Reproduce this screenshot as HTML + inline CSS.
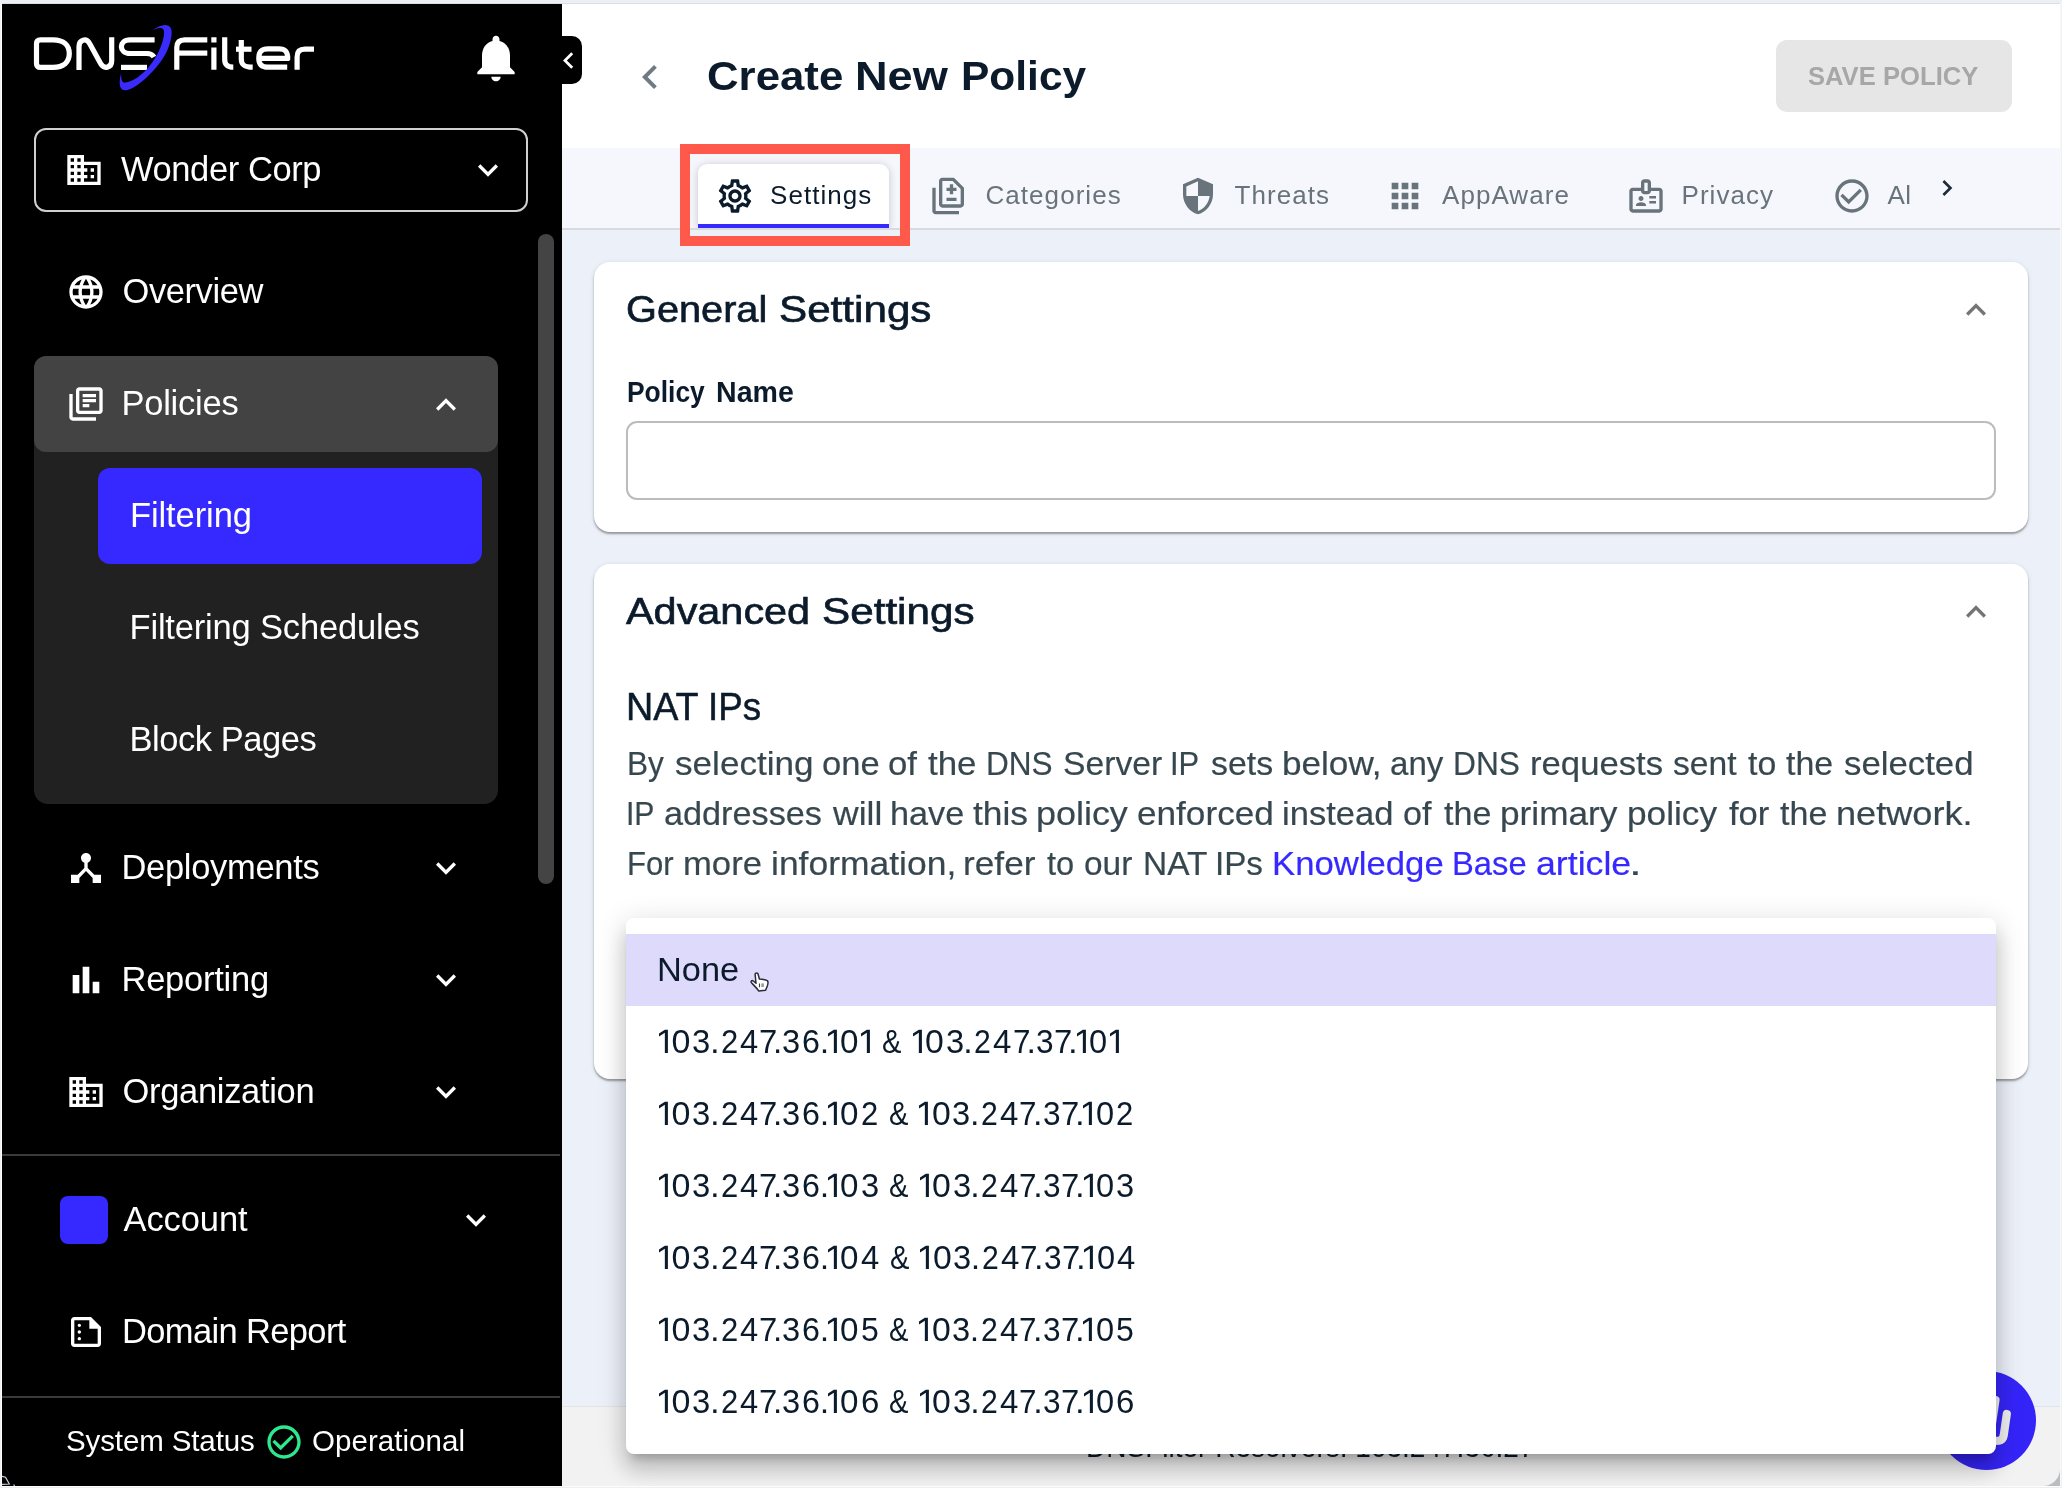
<!DOCTYPE html>
<html>
<head>
<meta charset="utf-8">
<title>Create New Policy</title>
<style>
*{box-sizing:border-box;margin:0;padding:0}
html,body{width:2062px;height:1488px;overflow:hidden;background:#ecf0f9;font-family:"Liberation Sans",sans-serif;}
body{position:relative}
#all{position:absolute;left:0;top:0;width:2062px;height:1488px;will-change:transform}
.a{position:absolute}
.t{position:absolute;white-space:nowrap}
svg{position:absolute;overflow:visible}
/* sidebar */
#side{left:2px;top:4px;width:560px;height:1482px;background:#000}
.nav{font-size:34.5px;letter-spacing:-.25px;line-height:40px;color:#fff}
.sub{font-size:34.5px;letter-spacing:-.25px;line-height:40px;color:#fff}
/* main */
#hdr{left:562px;top:4px;width:1498px;height:144px;background:#fff}
#tabs{left:562px;top:148px;width:1498px;height:80px;background:#f6f7fc}
#tabline{left:562px;top:228px;width:1498px;height:2px;background:#d9dade}
.tab{font-size:26px;line-height:40px;color:#68737c;letter-spacing:1.05px}
.card{left:594px;width:1434px;background:#fff;border-radius:16px;box-shadow:0 2px 2px rgba(0,0,0,.32),0 1px 5px rgba(0,0,0,.12)}
.hw{font-weight:bold;color:#0b1b2b;transform-origin:0 0}
.hs{font-size:36px;line-height:44px;color:#0b1b2b;transform-origin:0 0;-webkit-text-stroke:.65px #0b1b2b}
.pw{font-size:34px;line-height:50px;color:#37474f;transform-origin:0 0;-webkit-text-stroke:.2px currentColor}
.lk{color:#3629ff}
.nt{font-size:38px;line-height:48px;color:#0b1b2b;transform-origin:0 0;-webkit-text-stroke:.5px #0b1b2b}
.ipl{left:0;width:2062px;height:72px;font-size:34px;line-height:72px;color:#0b1b2b}
.ipl .o{top:23.8px;fill:#0b1b2b}
.ipl i{position:absolute;top:0;font-style:normal;transform-origin:0 0;white-space:nowrap}
.opt{left:658px;font-size:34px;line-height:72px;color:#0b1b2b}
</style>
</head>
<body>
<div id="all">

<!-- ============ MAIN BACKGROUNDS ============ -->
<div class="a" id="hdr"></div>
<div class="a" id="tabs"></div>
<div class="a" id="tabline"></div>
<!-- header -->
<svg class="a" style="left:626.3px;top:52.5px" width="48" height="48" viewBox="0 0 24 24"><path fill="#6f7a83" d="M15.41 7.41L14 6l-6 6 6 6 1.41-1.41L10.83 12z"/></svg>
<div class="t hw" style="left:706.8px;top:50px;font-size:40px;line-height:52px;transform:scaleX(1.0943)">Create</div>
<div class="t hw" style="left:855.1px;top:50px;font-size:40px;line-height:52px;transform:scaleX(1.129)">New</div>
<div class="t hw" style="left:961.2px;top:50px;font-size:40px;line-height:52px;transform:scaleX(1.0619)">Policy</div>
<div class="a" style="left:1776px;top:40px;width:236px;height:72px;background:#e6e6e6;border-radius:11px"></div>
<div class="t hw" style="left:1808.4px;top:56px;font-size:26.4px;line-height:40px;color:#a7a7a7;transform:scaleX(.9682)">SAVE</div>
<div class="t hw" style="left:1883.1px;top:56px;font-size:26.4px;line-height:40px;color:#a7a7a7;transform:scaleX(.9709)">POLICY</div>

<!-- tabs -->
<div class="a" style="left:562px;top:148px;width:1498px;height:80px;overflow:hidden"><div class="a" style="left:136px;top:16px;width:191px;height:64px;background:#fff;border-radius:9px 9px 0 0;box-shadow:0 1px 9px rgba(0,0,0,.2)"></div></div>
<div class="a" style="left:698px;top:224px;width:191px;height:4px;background:#3629ff"></div>
<svg class="a" style="left:714.5px;top:176px" width="40" height="40" viewBox="0 0 24 24"><path fill="#0b1b2b" d="M19.43 12.98c.04-.32.07-.64.07-.98 0-.34-.03-.66-.07-.98l2.11-1.65c.19-.15.24-.42.12-.64l-2-3.46c-.09-.16-.26-.25-.44-.25-.06 0-.12.01-.17.03l-2.49 1c-.52-.4-1.08-.73-1.69-.98l-.38-2.65C14.46 2.18 14.25 2 14 2h-4c-.25 0-.46.18-.49.42l-.38 2.65c-.61.25-1.17.59-1.69.98l-2.49-1c-.06-.02-.12-.03-.18-.03-.17 0-.34.09-.43.25l-2 3.46c-.13.22-.07.49.12.64l2.11 1.65c-.04.32-.07.65-.07.98 0 .33.03.66.07.98l-2.11 1.65c-.19.15-.24.42-.12.64l2 3.46c.09.16.26.25.44.25.06 0 .12-.01.17-.03l2.49-1c.52.4 1.08.73 1.69.98l.38 2.65c.03.24.24.42.49.42h4c.25 0 .46-.18.49-.42l.38-2.65c.61-.25 1.17-.59 1.69-.98l2.49 1c.06.02.12.03.18.03.17 0 .34-.09.43-.25l2-3.46c.12-.22.07-.49-.12-.64l-2.11-1.65zm-1.98-1.71c.04.31.05.52.05.73 0 .21-.02.43-.05.73l-.14 1.13.89.7 1.08.84-.7 1.21-1.27-.51-1.04-.42-.9.68c-.43.32-.84.56-1.25.73l-1.06.43-.16 1.13-.2 1.35h-1.4l-.19-1.35-.16-1.13-1.06-.43c-.43-.18-.83-.41-1.23-.71l-.91-.7-1.06.43-1.27.51-.7-1.21 1.08-.84.89-.7-.14-1.13c-.03-.31-.05-.54-.05-.74s.02-.43.05-.73l.14-1.13-.89-.7-1.08-.84.7-1.21 1.27.51 1.04.42.9-.68c.43-.32.84-.56 1.25-.73l1.06-.43.16-1.13.2-1.35h1.39l.19 1.35.16 1.13 1.06.43c.43.18.83.41 1.23.71l.91.7 1.06-.43 1.27-.51.7 1.21-1.07.85-.89.7.14 1.13zM12 8c-2.21 0-4 1.79-4 4s1.79 4 4 4 4-1.79 4-4-1.79-4-4-4zm0 6c-1.1 0-2-.9-2-2s.9-2 2-2 2 .9 2 2-.9 2-2 2z"/></svg>
<div class="t tab" style="left:770px;top:175px;color:#0b1b2b">Settings</div>

<svg class="a" style="left:929px;top:176px" width="40" height="40" viewBox="0 0 24 24"><path fill="#68737c" d="M18 23H4c-1.1 0-2-.9-2-2V7h2v14h14v2zM14.5 7V5h-2v2h-2v2h2v2h2V9h2V7h-2zm2 6h-6v2h6v-2zM15 1H8c-1.1 0-1.99.9-1.99 2L6 17c0 1.1.89 2 1.99 2H19c1.1 0 2-.9 2-2V7l-6-6zm4 16H8V3h6.17L19 7.83V17z"/></svg>
<div class="t tab" style="left:985.5px;top:175px">Categories</div>

<svg class="a" style="left:1178px;top:176px" width="40" height="40" viewBox="0 0 24 24"><path fill="#68737c" d="M12 1L3 5v6c0 5.55 3.84 10.74 9 12 5.16-1.26 9-6.45 9-12V5l-9-4zm0 10.99h7c-.53 4.12-3.28 7.79-7 8.94V12H5V6.3l7-3.11v8.8z"/></svg>
<div class="t tab" style="left:1234.5px;top:175px">Threats</div>

<svg class="a" style="left:1385px;top:176px" width="40" height="40" viewBox="0 0 24 24"><path fill="#68737c" d="M4 8h4V4H4v4zm6 12h4v-4h-4v4zm-6 0h4v-4H4v4zm0-6h4v-4H4v4zm6 0h4v-4h-4v4zm6-10v4h4V4h-4zm-6 4h4V4h-4v4zm6 6h4v-4h-4v4zm0 6h4v-4h-4v4z"/></svg>
<div class="t tab" style="left:1442px;top:175px">AppAware</div>

<svg class="a" style="left:1626px;top:176px" width="40" height="40" viewBox="0 0 24 24"><path fill="#68737c" d="M14 13.5h4V12h-4v1.5zm0 3h4V15h-4v1.5zM20 7h-5V4c0-1.1-.9-2-2-2h-2c-1.1 0-2 .9-2 2v3H4c-1.1 0-2 .9-2 2v11c0 1.1.9 2 2 2h16c1.1 0 2-.9 2-2V9c0-1.1-.9-2-2-2zm-9-3h2v5h-2V4zm9 16H4V9h5c0 1.1.9 2 2 2h2c1.1 0 2-.9 2-2h5v11zM9 15c.83 0 1.5-.67 1.5-1.5S9.83 12 9 12s-1.5.67-1.5 1.5S8.17 15 9 15zm2.08 1.18C10.44 15.9 9.74 15.75 9 15.75s-1.44.15-2.08.43c-.56.24-.92.78-.92 1.39V18h6v-.43c0-.61-.36-1.15-.92-1.39z"/></svg>
<div class="t tab" style="left:1681.5px;top:175px">Privacy</div>

<svg class="a" style="left:1831.5px;top:176px" width="40" height="40" viewBox="0 0 24 24"><path fill="#68737c" d="M16.59 7.58L10 14.17l-3.59-3.58L5 12l5 5 8-8zM12 2C6.48 2 2 6.48 2 12s4.48 10 10 10 10-4.48 10-10S17.52 2 12 2zm0 18c-4.42 0-8-3.58-8-8s3.58-8 8-8 8 3.58 8 8-3.58 8-8 8z"/></svg>
<div class="a" style="left:1886px;top:175px;width:23.5px;height:40px;overflow:hidden"><div class="t tab" style="left:1.5px;top:0;letter-spacing:.3px">Allow</div></div>
<svg class="a" style="left:1931px;top:172px" width="32" height="32" viewBox="0 0 24 24"><path fill="#1c2b39" d="M10 6L8.59 7.41 13.17 12l-4.58 4.59L10 18l6-6z"/></svg>

<!-- red highlight -->
<div class="a" style="left:680px;top:144px;width:230px;height:102px;border:10px solid #ff594c"></div>

<!-- General settings card -->
<div class="a card" style="top:262px;height:270px"></div>
<div class="t hs" style="left:626.3px;top:288px;transform:scaleX(1.103)">General</div>
<div class="t hs" style="left:779px;top:288px;transform:scaleX(1.172)">Settings</div>
<svg class="a" style="left:1956px;top:290px" width="40" height="40" viewBox="0 0 24 24"><path fill="#757575" d="M12 8l-6 6 1.41 1.41L12 10.83l4.59 4.58L18 14z"/></svg>
<div class="t hw" style="left:627px;top:372px;font-size:29.6px;line-height:40px;transform:scaleX(.8925)">Policy</div>
<div class="t hw" style="left:715.9px;top:372px;font-size:29.6px;line-height:40px;transform:scaleX(.9653)">Name</div>
<div class="a" style="left:626px;top:421px;width:1370px;height:79px;border:2px solid #bcbcbc;border-radius:11px;background:#fff"></div>

<!-- Advanced settings card -->
<div class="a card" style="top:564px;height:515px"></div>
<div class="t hs" style="left:625.8px;top:590px;transform:scaleX(1.15)">Advanced</div>
<div class="t hs" style="left:821.7px;top:590px;transform:scaleX(1.173)">Settings</div>
<svg class="a" style="left:1956px;top:592px" width="40" height="40" viewBox="0 0 24 24"><path fill="#757575" d="M12 8l-6 6 1.41 1.41L12 10.83l4.59 4.58L18 14z"/></svg>
<div class="t nt" style="left:625.5px;top:683px;transform:scaleX(.9919)">NAT</div>
<div class="t nt" style="left:708.1px;top:683px;transform:scaleX(.9665)">IPs</div>
<div class="t pw" style="left:626.6px;top:738px;transform:scaleX(0.9289)">By</div>
<div class="t pw" style="left:675.4px;top:738px;transform:scaleX(1.0326)">selecting</div>
<div class="t pw" style="left:821.7px;top:738px;transform:scaleX(1.0179)">one</div>
<div class="t pw" style="left:888.2px;top:738px;transform:scaleX(1.0212)">of</div>
<div class="t pw" style="left:928.4px;top:738px;transform:scaleX(1.0268)">the</div>
<div class="t pw" style="left:986.0px;top:738px;transform:scaleX(0.9275)">DNS</div>
<div class="t pw" style="left:1062.8px;top:738px;transform:scaleX(0.9907)">Server</div>
<div class="t pw" style="left:1170.4px;top:738px;transform:scaleX(0.9072)">IP</div>
<div class="t pw" style="left:1210.6px;top:738px;transform:scaleX(0.9958)">sets</div>
<div class="t pw" style="left:1281.5px;top:738px;transform:scaleX(1.0331)">below,</div>
<div class="t pw" style="left:1389.5px;top:738px;transform:scaleX(0.9718)">any</div>
<div class="t pw" style="left:1453.0px;top:738px;transform:scaleX(0.9319)">DNS</div>
<div class="t pw" style="left:1529.7px;top:738px;transform:scaleX(1.0204)">requests</div>
<div class="t pw" style="left:1672.9px;top:738px;transform:scaleX(0.9889)">sent</div>
<div class="t pw" style="left:1747.7px;top:738px;transform:scaleX(0.9947)">to</div>
<div class="t pw" style="left:1785.8px;top:738px;transform:scaleX(0.9988)">the</div>
<div class="t pw" style="left:1844.0px;top:738px;transform:scaleX(1.0230)">selected</div>
<div class="t pw" style="left:625.8px;top:788px;transform:scaleX(0.8854)">IP</div>
<div class="t pw" style="left:664.1px;top:788px;transform:scaleX(1.0067)">addresses</div>
<div class="t pw" style="left:833.2px;top:788px;transform:scaleX(1.0437)">will</div>
<div class="t pw" style="left:889.6px;top:788px;transform:scaleX(1.0068)">have</div>
<div class="t pw" style="left:973.1px;top:788px;transform:scaleX(1.0403)">this</div>
<div class="t pw" style="left:1035.7px;top:788px;transform:scaleX(1.0562)">policy</div>
<div class="t pw" style="left:1136.9px;top:788px;transform:scaleX(1.0340)">enforced</div>
<div class="t pw" style="left:1282.3px;top:788px;transform:scaleX(1.0158)">instead</div>
<div class="t pw" style="left:1403.1px;top:788px;transform:scaleX(1.0033)">of</div>
<div class="t pw" style="left:1444.1px;top:788px;transform:scaleX(1.0031)">the</div>
<div class="t pw" style="left:1500.3px;top:788px;transform:scaleX(1.0356)">primary</div>
<div class="t pw" style="left:1626.9px;top:788px;transform:scaleX(1.0362)">policy</div>
<div class="t pw" style="left:1728.8px;top:788px;transform:scaleX(1.0164)">for</div>
<div class="t pw" style="left:1779.8px;top:788px;transform:scaleX(1.0010)">the</div>
<div class="t pw" style="left:1835.9px;top:788px;transform:scaleX(1.0633)">network.</div>
<div class="t pw" style="left:626.7px;top:838px;transform:scaleX(0.9142)">For</div>
<div class="t pw" style="left:682.9px;top:838px;transform:scaleX(1.0194)">more</div>
<div class="t pw" style="left:770.7px;top:838px;transform:scaleX(1.0428)">information,</div>
<div class="t pw" style="left:963.2px;top:838px;transform:scaleX(1.0372)">refer</div>
<div class="t pw" style="left:1047.0px;top:838px;transform:scaleX(0.9582)">to</div>
<div class="t pw" style="left:1083.5px;top:838px;transform:scaleX(0.9829)">our</div>
<div class="t pw" style="left:1142.6px;top:838px;transform:scaleX(0.9839)">NAT</div>
<div class="t pw" style="left:1215.3px;top:838px;transform:scaleX(0.9751)">IPs</div>
<div class="t pw lk" style="left:1272.1px;top:838px;transform:scaleX(1.0204)">Knowledge</div>
<div class="t pw lk" style="left:1452.4px;top:838px;transform:scaleX(0.9626)">Base</div>
<div class="t pw lk" style="left:1535.8px;top:838px;transform:scaleX(1.0497)">article</div>
<div class="t pw" style="left:1629.2px;top:838px;transform:scaleX(1.3500)">.</div>


<!-- footer -->
<div class="a" style="left:562px;top:1406px;width:1498px;height:80px;background:#f2f2f3;border-top:1px solid #e2e3e7"></div>
<div class="t" style="left:1086.1px;top:1426.6px;font-size:30px;line-height:40px;color:#0b1b2b;transform:scaleX(.9339);transform-origin:0 0">DNSFilter Resolvers: 103.247.36.27</div>
<!-- chat bubble -->
<div class="a" style="left:1936.8px;top:1370.7px;width:99px;height:99px;border-radius:50%;background:#3524f8"></div>
<svg class="a" style="left:1980px;top:1385px" width="50" height="70" viewBox="1980 1385 50 70"><path fill="none" stroke="#efefef" stroke-width="8.2" stroke-linecap="round" d="M1995.5,1400 L1991,1430 M2006.8,1414 L2003.7,1435.5 C2002.8,1440.6 1999.5,1441 1994,1440.8"/></svg>

<!-- dropdown -->
<div class="a" style="left:626px;top:918px;width:1370px;height:536px;background:#fff;border-radius:8px;box-shadow:0 10px 10px -6px rgba(0,0,0,.2),0 16px 20px 2px rgba(0,0,0,.14),0 6px 28px 4px rgba(0,0,0,.12)"></div>
<div class="a" style="left:626px;top:934px;width:1370px;height:72px;background:#dedafc"></div>
<div class="t opt" style="left:656.8px;top:933.4px;transform:scaleX(1.0106);transform-origin:0 0">None</div>
<div class="a ipl" style="top:1005.2px">
<svg class="o" style="left:659.1px" width="9" height="24" viewBox="0 0 9 24"><path d="M5.85.65H8.9V24H5.85V3.7L0 7.4V4.4Z"/></svg><i style="left:671.4px;transform:scaleX(1.000)">0</i><i style="left:692.0px;transform:scaleX(0.965)">3</i><i style="left:709.7px;transform:scaleX(1.025)">.</i><i style="left:720.6px;transform:scaleX(0.912)">2</i><i style="left:740.0px;transform:scaleX(0.961)">4</i><i style="left:758.7px;transform:scaleX(0.965)">7</i><i style="left:773.2px;transform:scaleX(0.975)">.</i><i style="left:782.4px;transform:scaleX(0.959)">3</i><i style="left:802.0px;transform:scaleX(0.947)">6</i><i style="left:819.8px;transform:scaleX(1.000)">.</i><svg class="o" style="left:827.6px" width="9" height="24" viewBox="0 0 9 24"><path d="M5.85.65H8.9V24H5.85V3.7L0 7.4V4.4Z"/></svg><i style="left:840.3px;transform:scaleX(0.977)">0</i><svg class="o" style="left:861.0px" width="9" height="24" viewBox="0 0 9 24"><path d="M5.85.65H8.9V24H5.85V3.7L0 7.4V4.4Z"/></svg><i style="left:882.1px;transform:scaleX(0.855)">&amp;</i><svg class="o" style="left:912.7px" width="9" height="24" viewBox="0 0 9 24"><path d="M5.85.65H8.9V24H5.85V3.7L0 7.4V4.4Z"/></svg><i style="left:925.1px;transform:scaleX(0.994)">0</i><i style="left:945.7px;transform:scaleX(0.959)">3</i><i style="left:963.3px;transform:scaleX(1.000)">.</i><i style="left:974.3px;transform:scaleX(0.888)">2</i><i style="left:993.4px;transform:scaleX(0.972)">4</i><i style="left:1012.5px;transform:scaleX(0.923)">7</i><i style="left:1026.4px;transform:scaleX(1.000)">.</i><i style="left:1036.1px;transform:scaleX(0.929)">3</i><i style="left:1054.2px;transform:scaleX(0.965)">7</i><i style="left:1068.2px;transform:scaleX(1.025)">.</i><svg class="o" style="left:1076.7px" width="9" height="24" viewBox="0 0 9 24"><path d="M5.85.65H8.9V24H5.85V3.7L0 7.4V4.4Z"/></svg><i style="left:1089.4px;transform:scaleX(0.959)">0</i><svg class="o" style="left:1109.7px" width="9" height="24" viewBox="0 0 9 24"><path d="M5.85.65H8.9V24H5.85V3.7L0 7.4V4.4Z"/></svg></div>
<div class="a ipl" style="top:1077.2px">
<svg class="o" style="left:659.1px" width="9" height="24" viewBox="0 0 9 24"><path d="M5.85.65H8.9V24H5.85V3.7L0 7.4V4.4Z"/></svg><i style="left:671.4px;transform:scaleX(1.000)">0</i><i style="left:692.0px;transform:scaleX(0.965)">3</i><i style="left:709.7px;transform:scaleX(1.025)">.</i><i style="left:720.6px;transform:scaleX(0.912)">2</i><i style="left:740.0px;transform:scaleX(0.961)">4</i><i style="left:758.7px;transform:scaleX(0.965)">7</i><i style="left:773.2px;transform:scaleX(0.975)">.</i><i style="left:782.4px;transform:scaleX(0.959)">3</i><i style="left:802.0px;transform:scaleX(0.947)">6</i><i style="left:819.8px;transform:scaleX(1.000)">.</i><svg class="o" style="left:827.6px" width="9" height="24" viewBox="0 0 9 24"><path d="M5.85.65H8.9V24H5.85V3.7L0 7.4V4.4Z"/></svg><i style="left:840.3px;transform:scaleX(0.977)">0</i><i style="left:861.1px;transform:scaleX(0.912)">2</i><i style="left:888.8px;transform:scaleX(0.855)">&amp;</i><svg class="o" style="left:919.3px" width="9" height="24" viewBox="0 0 9 24"><path d="M5.85.65H8.9V24H5.85V3.7L0 7.4V4.4Z"/></svg><i style="left:931.7px;transform:scaleX(0.994)">0</i><i style="left:952.3px;transform:scaleX(0.959)">3</i><i style="left:969.9px;transform:scaleX(1.000)">.</i><i style="left:980.9px;transform:scaleX(0.888)">2</i><i style="left:1000.0px;transform:scaleX(0.972)">4</i><i style="left:1019.1px;transform:scaleX(0.923)">7</i><i style="left:1033.0px;transform:scaleX(1.000)">.</i><i style="left:1042.7px;transform:scaleX(0.929)">3</i><i style="left:1060.8px;transform:scaleX(0.965)">7</i><i style="left:1074.8px;transform:scaleX(1.025)">.</i><svg class="o" style="left:1083.3px" width="9" height="24" viewBox="0 0 9 24"><path d="M5.85.65H8.9V24H5.85V3.7L0 7.4V4.4Z"/></svg><i style="left:1096.0px;transform:scaleX(0.959)">0</i><i style="left:1116.4px;transform:scaleX(0.912)">2</i></div>
<div class="a ipl" style="top:1149.2px">
<svg class="o" style="left:659.1px" width="9" height="24" viewBox="0 0 9 24"><path d="M5.85.65H8.9V24H5.85V3.7L0 7.4V4.4Z"/></svg><i style="left:671.4px;transform:scaleX(1.000)">0</i><i style="left:692.0px;transform:scaleX(0.965)">3</i><i style="left:709.7px;transform:scaleX(1.025)">.</i><i style="left:720.6px;transform:scaleX(0.912)">2</i><i style="left:740.0px;transform:scaleX(0.961)">4</i><i style="left:758.7px;transform:scaleX(0.965)">7</i><i style="left:773.2px;transform:scaleX(0.975)">.</i><i style="left:782.4px;transform:scaleX(0.959)">3</i><i style="left:802.0px;transform:scaleX(0.947)">6</i><i style="left:819.8px;transform:scaleX(1.000)">.</i><svg class="o" style="left:827.6px" width="9" height="24" viewBox="0 0 9 24"><path d="M5.85.65H8.9V24H5.85V3.7L0 7.4V4.4Z"/></svg><i style="left:840.3px;transform:scaleX(0.977)">0</i><i style="left:860.7px;transform:scaleX(0.959)">3</i><i style="left:889.0px;transform:scaleX(0.855)">&amp;</i><svg class="o" style="left:919.6px" width="9" height="24" viewBox="0 0 9 24"><path d="M5.85.65H8.9V24H5.85V3.7L0 7.4V4.4Z"/></svg><i style="left:932.0px;transform:scaleX(0.994)">0</i><i style="left:952.6px;transform:scaleX(0.959)">3</i><i style="left:970.2px;transform:scaleX(1.000)">.</i><i style="left:981.2px;transform:scaleX(0.888)">2</i><i style="left:1000.3px;transform:scaleX(0.972)">4</i><i style="left:1019.4px;transform:scaleX(0.923)">7</i><i style="left:1033.3px;transform:scaleX(1.000)">.</i><i style="left:1043.0px;transform:scaleX(0.929)">3</i><i style="left:1061.1px;transform:scaleX(0.965)">7</i><i style="left:1075.1px;transform:scaleX(1.025)">.</i><svg class="o" style="left:1083.6px" width="9" height="24" viewBox="0 0 9 24"><path d="M5.85.65H8.9V24H5.85V3.7L0 7.4V4.4Z"/></svg><i style="left:1096.3px;transform:scaleX(0.959)">0</i><i style="left:1116.3px;transform:scaleX(0.959)">3</i></div>
<div class="a ipl" style="top:1221.2px">
<svg class="o" style="left:659.1px" width="9" height="24" viewBox="0 0 9 24"><path d="M5.85.65H8.9V24H5.85V3.7L0 7.4V4.4Z"/></svg><i style="left:671.4px;transform:scaleX(1.000)">0</i><i style="left:692.0px;transform:scaleX(0.965)">3</i><i style="left:709.7px;transform:scaleX(1.025)">.</i><i style="left:720.6px;transform:scaleX(0.912)">2</i><i style="left:740.0px;transform:scaleX(0.961)">4</i><i style="left:758.7px;transform:scaleX(0.965)">7</i><i style="left:773.2px;transform:scaleX(0.975)">.</i><i style="left:782.4px;transform:scaleX(0.959)">3</i><i style="left:802.0px;transform:scaleX(0.947)">6</i><i style="left:819.8px;transform:scaleX(1.000)">.</i><svg class="o" style="left:827.6px" width="9" height="24" viewBox="0 0 9 24"><path d="M5.85.65H8.9V24H5.85V3.7L0 7.4V4.4Z"/></svg><i style="left:840.3px;transform:scaleX(0.977)">0</i><i style="left:861.1px;transform:scaleX(0.967)">4</i><i style="left:889.6px;transform:scaleX(0.855)">&amp;</i><svg class="o" style="left:920.2px" width="9" height="24" viewBox="0 0 9 24"><path d="M5.85.65H8.9V24H5.85V3.7L0 7.4V4.4Z"/></svg><i style="left:932.6px;transform:scaleX(0.994)">0</i><i style="left:953.2px;transform:scaleX(0.959)">3</i><i style="left:970.8px;transform:scaleX(1.000)">.</i><i style="left:981.8px;transform:scaleX(0.888)">2</i><i style="left:1000.9px;transform:scaleX(0.972)">4</i><i style="left:1020.0px;transform:scaleX(0.923)">7</i><i style="left:1033.9px;transform:scaleX(1.000)">.</i><i style="left:1043.6px;transform:scaleX(0.929)">3</i><i style="left:1061.7px;transform:scaleX(0.965)">7</i><i style="left:1075.7px;transform:scaleX(1.025)">.</i><svg class="o" style="left:1084.2px" width="9" height="24" viewBox="0 0 9 24"><path d="M5.85.65H8.9V24H5.85V3.7L0 7.4V4.4Z"/></svg><i style="left:1096.9px;transform:scaleX(0.959)">0</i><i style="left:1117.3px;transform:scaleX(0.967)">4</i></div>
<div class="a ipl" style="top:1293.2px">
<svg class="o" style="left:659.1px" width="9" height="24" viewBox="0 0 9 24"><path d="M5.85.65H8.9V24H5.85V3.7L0 7.4V4.4Z"/></svg><i style="left:671.4px;transform:scaleX(1.000)">0</i><i style="left:692.0px;transform:scaleX(0.965)">3</i><i style="left:709.7px;transform:scaleX(1.025)">.</i><i style="left:720.6px;transform:scaleX(0.912)">2</i><i style="left:740.0px;transform:scaleX(0.961)">4</i><i style="left:758.7px;transform:scaleX(0.965)">7</i><i style="left:773.2px;transform:scaleX(0.975)">.</i><i style="left:782.4px;transform:scaleX(0.959)">3</i><i style="left:802.0px;transform:scaleX(0.947)">6</i><i style="left:819.8px;transform:scaleX(1.000)">.</i><svg class="o" style="left:827.6px" width="9" height="24" viewBox="0 0 9 24"><path d="M5.85.65H8.9V24H5.85V3.7L0 7.4V4.4Z"/></svg><i style="left:840.3px;transform:scaleX(0.977)">0</i><i style="left:861.1px;transform:scaleX(0.941)">5</i><i style="left:888.6px;transform:scaleX(0.855)">&amp;</i><svg class="o" style="left:919.2px" width="9" height="24" viewBox="0 0 9 24"><path d="M5.85.65H8.9V24H5.85V3.7L0 7.4V4.4Z"/></svg><i style="left:931.6px;transform:scaleX(0.994)">0</i><i style="left:952.2px;transform:scaleX(0.959)">3</i><i style="left:969.8px;transform:scaleX(1.000)">.</i><i style="left:980.8px;transform:scaleX(0.888)">2</i><i style="left:999.9px;transform:scaleX(0.972)">4</i><i style="left:1019.0px;transform:scaleX(0.923)">7</i><i style="left:1032.9px;transform:scaleX(1.000)">.</i><i style="left:1042.6px;transform:scaleX(0.929)">3</i><i style="left:1060.7px;transform:scaleX(0.965)">7</i><i style="left:1074.7px;transform:scaleX(1.025)">.</i><svg class="o" style="left:1083.2px" width="9" height="24" viewBox="0 0 9 24"><path d="M5.85.65H8.9V24H5.85V3.7L0 7.4V4.4Z"/></svg><i style="left:1095.9px;transform:scaleX(0.959)">0</i><i style="left:1116.3px;transform:scaleX(0.941)">5</i></div>
<div class="a ipl" style="top:1365.2px">
<svg class="o" style="left:659.1px" width="9" height="24" viewBox="0 0 9 24"><path d="M5.85.65H8.9V24H5.85V3.7L0 7.4V4.4Z"/></svg><i style="left:671.4px;transform:scaleX(1.000)">0</i><i style="left:692.0px;transform:scaleX(0.965)">3</i><i style="left:709.7px;transform:scaleX(1.025)">.</i><i style="left:720.6px;transform:scaleX(0.912)">2</i><i style="left:740.0px;transform:scaleX(0.961)">4</i><i style="left:758.7px;transform:scaleX(0.965)">7</i><i style="left:773.2px;transform:scaleX(0.975)">.</i><i style="left:782.4px;transform:scaleX(0.959)">3</i><i style="left:802.0px;transform:scaleX(0.947)">6</i><i style="left:819.8px;transform:scaleX(1.000)">.</i><svg class="o" style="left:827.6px" width="9" height="24" viewBox="0 0 9 24"><path d="M5.85.65H8.9V24H5.85V3.7L0 7.4V4.4Z"/></svg><i style="left:840.3px;transform:scaleX(0.977)">0</i><i style="left:860.8px;transform:scaleX(0.971)">6</i><i style="left:889.0px;transform:scaleX(0.855)">&amp;</i><svg class="o" style="left:919.6px" width="9" height="24" viewBox="0 0 9 24"><path d="M5.85.65H8.9V24H5.85V3.7L0 7.4V4.4Z"/></svg><i style="left:932.0px;transform:scaleX(0.994)">0</i><i style="left:952.6px;transform:scaleX(0.959)">3</i><i style="left:970.2px;transform:scaleX(1.000)">.</i><i style="left:981.2px;transform:scaleX(0.888)">2</i><i style="left:1000.3px;transform:scaleX(0.972)">4</i><i style="left:1019.4px;transform:scaleX(0.923)">7</i><i style="left:1033.3px;transform:scaleX(1.000)">.</i><i style="left:1043.0px;transform:scaleX(0.929)">3</i><i style="left:1061.1px;transform:scaleX(0.965)">7</i><i style="left:1075.1px;transform:scaleX(1.025)">.</i><svg class="o" style="left:1083.6px" width="9" height="24" viewBox="0 0 9 24"><path d="M5.85.65H8.9V24H5.85V3.7L0 7.4V4.4Z"/></svg><i style="left:1096.3px;transform:scaleX(0.959)">0</i><i style="left:1116.4px;transform:scaleX(0.971)">6</i></div>

<!-- cursor -->
<svg class="a" style="left:748px;top:970px" width="24" height="24" viewBox="748 970 24 24"><path fill="#fff" stroke="#2b2b3a" stroke-width="1.5" stroke-linejoin="round" d="M755.1,974.2 C755.3,972.8 757.8,972.7 758,974 L759.4,979 L762,979.2 L764.8,979.7 L767.3,980.6 C768.3,981.5 768,984 767.3,986 L765.6,990.3 L758.8,991 C757,988.5 755,986.5 751.3,982.6 C750.5,981.3 752,980 753.3,981 L756,983.2 Z"/><path stroke="#3a3a48" stroke-width="1.1" d="M759.5,983.5 V987.3"/><rect x="761.3" y="983.4" width="2.6" height="3.6" fill="#9a9a9a"/></svg>



<!-- ============ SIDEBAR ============ -->
<div class="a" id="side"></div>
<!-- logo: svg in target coordinates -->
<svg class="a" style="left:0;top:0" width="562" height="120" viewBox="0 0 562 120">
 <g fill="none" stroke="#fff" stroke-width="5.2" stroke-linejoin="round" stroke-linecap="butt">
  <!-- D -->
  <path d="M40.5,39.8 H53 C64,39.8 69.3,45.5 69.3,53.6 C69.3,61.7 64,67.4 53,67.4 H40.5 C37.8,67.4 36.5,66 36.5,63.4 V43.8 C36.5,41.2 37.8,39.8 40.5,39.8 Z"/>
  <!-- N -->
  <path d="M79,70 V46.5 C79,39.5 86.3,37.6 89.6,43.5 L100.6,63.6 C104,69.6 111.7,67.8 111.7,61 V37.2"/>
  <!-- S -->
  <path d="M154.6,39.8 H130 C118.5,39.8 118.5,53.5 130,53.5 H147 C150.5,53.5 152.6,54.6 154,57"/>
  <path d="M121,67.4 H147"/>
  <!-- F -->
  <path d="M176.8,69.8 V47.5 C176.8,42.2 179.5,39.9 184.8,39.9 H207.3"/>
  <path d="M176.8,53.1 H207.3"/>
  <!-- i -->
  <path d="M213.9,37.3 V42.5 M213.9,47.5 V69.8"/>
  <!-- l -->
  <path d="M224.7,37.3 V59 C224.7,64.6 227.3,67.2 233.3,67.2"/>
  <!-- t -->
  <path d="M241.3,40.1 V59 C241.3,64.6 244,67.2 252.7,67.2"/>
  <path d="M236,49.2 H251.5"/>
  <!-- e -->
  <path d="M287.2,67.2 H268 C261,67.2 258.8,64 258.8,58.2 C258.8,52 261,48.9 268,48.9 H279 C286,48.9 287.7,52 287.7,58.4 H259.5"/>
  <!-- r -->
  <path d="M297.1,69.8 V57 C297.1,51.5 299.5,49.2 305,49.2 H314"/>
 </g>
 <!-- swoosh -->
 <path fill="#392bfb" d="M151.9,30.6 C157,27 161.5,24.8 165,24.9 C169.5,25 172.2,28 171.7,33.5 C171.2,39.5 169.5,45.5 167,51 C164.5,56.5 161,61.5 156.9,66.6 C152.5,72 147.5,77 141.4,82 C136,86.3 130.5,89.6 126.6,90.2 C123,90.7 120.6,89 120,86 C119.3,82 119.8,77.5 121.2,73.5 C121,76 121.1,78 121.6,79.7 C122.3,82 123.7,83 125.9,82.5 C129.5,81.7 133.5,80 137.5,77.4 C141.7,74.5 145.5,71 149.1,66.6 C152,63 154.6,59 156.9,54.9 C159.6,50 161.8,44.5 163.1,39.4 C164,36 164.4,33 163.9,30.9 C163.5,29 162,28 160,28.1 C157.5,28.3 154.8,29.2 151.9,30.6 Z"/>
</svg>

<!-- bell -->
<svg class="a" style="left:468px;top:30px" width="56" height="56" viewBox="0 0 24 24"><path fill="#fff" d="M12 22c1.1 0 2-.9 2-2h-4c0 1.1.89 2 2 2zm6-6v-5c0-3.07-1.64-5.64-4.5-6.32V4c0-.83-.67-1.5-1.5-1.5s-1.500.67-1.500 1.500v.68C7.630 5.360 6 7.920 6 11v5l-2 2v1h16v-1l-2-2z"/></svg>

<!-- org selector -->
<div class="a" style="left:34px;top:128px;width:494px;height:84px;border:2px solid #d0d0d0;border-radius:12px"></div>
<svg class="a" style="left:64px;top:150px" width="40" height="40" viewBox="0 0 24 24"><path fill="#fff" d="M12 7V3H2v18h20V7H12zM6 19H4v-2h2v2zm0-4H4v-2h2v2zm0-4H4V9h2v2zm0-4H4V5h2v2zm4 12H8v-2h2v2zm0-4H8v-2h2v2zm0-4H8V9h2v2zm0-4H8V5h2v2zm10 12h-8v-2h2v-2h-2v-2h2v-2h-2V9h8v10zm-2-8h-2v2h2v-2zm0 4h-2v2h2v-2z"/></svg>
<div class="t nav" style="left:121px;top:149px;letter-spacing:-0.40px">Wonder Corp</div>
<svg class="a" style="left:468px;top:150px" width="40" height="40" viewBox="0 0 24 24"><path fill="#fff" d="M16.59 8.59L12 13.17 7.41 8.59 6 10l6 6 6-6z"/></svg>

<!-- scrollbar -->
<div class="a" style="left:538px;top:234px;width:16px;height:650px;background:#444;border-radius:8px"></div>

<!-- Overview -->
<svg class="a" style="left:66px;top:272px" width="40" height="40" viewBox="0 0 24 24"><path fill="#fff" d="M11.99 2C6.47 2 2 6.48 2 12s4.47 10 9.99 10C17.52 22 22 17.52 22 12S17.52 2 11.99 2zm6.93 6h-2.95c-.32-1.25-.78-2.45-1.38-3.56 1.84.63 3.37 1.91 4.33 3.56zM12 4.04c.83 1.2 1.48 2.53 1.91 3.96h-3.82c.43-1.43 1.08-2.76 1.91-3.96zM4.26 14C4.1 13.36 4 12.69 4 12s.1-1.36.26-2h3.38c-.08.66-.14 1.32-.14 2 0 .68.06 1.34.14 2H4.26zm.82 2h2.95c.32 1.25.78 2.45 1.38 3.56-1.84-.63-3.37-1.9-4.33-3.56zm2.95-8H5.08c.96-1.66 2.49-2.93 4.33-3.56C8.81 5.55 8.35 6.75 8.03 8zM12 19.96c-.83-1.2-1.48-2.53-1.91-3.96h3.82c-.43 1.43-1.08 2.76-1.91 3.96zM14.34 14H9.66c-.09-.66-.16-1.32-.16-2 0-.68.07-1.35.16-2h4.68c.09.65.16 1.32.16 2 0 .68-.07 1.34-.16 2zm.25 5.56c.6-1.11 1.06-2.31 1.38-3.56h2.95c-.96 1.65-2.49 2.93-4.33 3.56zM16.36 14c.08-.66.14-1.32.14-2 0-.68-.06-1.34-.14-2h3.38c.16.64.26 1.31.26 2s-.1 1.36-.26 2h-3.38z"/></svg>
<div class="t nav" style="left:122.5px;top:271px;letter-spacing:-0.41px">Overview</div>

<!-- Policies group -->
<div class="a" style="left:34px;top:356px;width:464px;height:448px;background:#212121;border-radius:14px"></div>
<div class="a" style="left:34px;top:356px;width:464px;height:96px;background:#434343;border-radius:12px"></div>
<svg class="a" style="left:66px;top:384px" width="40" height="40" viewBox="0 0 24 24"><path fill="#fff" d="M4 6H2v14c0 1.1.9 2 2 2h14v-2H4V6zm16-4H8c-1.1 0-2 .9-2 2v12c0 1.1.9 2 2 2h12c1.1 0 2-.9 2-2V4c0-1.1-.9-2-2-2zm0 14H8V4h12v12zM10 9h8v2h-8zm0 3h4v2h-4zm0-6h8v2h-8z"/></svg>
<div class="t nav" style="left:121.5px;top:383px;letter-spacing:-0.25px">Policies</div>
<svg class="a" style="left:426px;top:385px" width="40" height="40" viewBox="0 0 24 24"><path fill="#fff" d="M12 8l-6 6 1.41 1.41L12 10.83l4.59 4.58L18 14z"/></svg>

<div class="a" style="left:98px;top:468px;width:384px;height:96px;background:#3629ff;border-radius:12px"></div>
<div class="t sub" style="left:130px;top:495px;letter-spacing:-0.10px">Filtering</div>
<div class="t sub" style="left:129.5px;top:607px;letter-spacing:-0.18px">Filtering Schedules</div>
<div class="t sub" style="left:129.5px;top:719px;letter-spacing:-0.46px">Block Pages</div>

<!-- Deployments -->
<svg class="a" style="left:66px;top:848px" width="40" height="40" viewBox="0 0 24 24"><path fill="#fff" d="M17 16l-4-4V8.820C14.160 8.400 15 7.300 15 6c0-1.660-1.340-3-3-3S9 4.340 9 6c0 1.300.84 2.400 2 2.820V12l-4 4H3v5h5v-3.050l4-4.200 4 4.200V21h5v-5h-4z"/></svg>
<div class="t nav" style="left:121.5px;top:847px;letter-spacing:-0.31px">Deployments</div>
<svg class="a" style="left:426px;top:848px" width="40" height="40" viewBox="0 0 24 24"><path fill="#fff" d="M16.59 8.59L12 13.17 7.41 8.59 6 10l6 6 6-6z"/></svg>

<!-- Reporting -->
<svg class="a" style="left:66px;top:960px" width="40" height="40" viewBox="0 0 24 24"><path fill="#fff" d="M4 9h4v11H4zm12 4h4v7h-4zm-6-9h4v16h-4z"/></svg>
<div class="t nav" style="left:121.5px;top:959px;letter-spacing:-0.25px">Reporting</div>
<svg class="a" style="left:426px;top:960px" width="40" height="40" viewBox="0 0 24 24"><path fill="#fff" d="M16.59 8.59L12 13.17 7.41 8.59 6 10l6 6 6-6z"/></svg>

<!-- Organization -->
<svg class="a" style="left:66px;top:1072px" width="40" height="40" viewBox="0 0 24 24"><path fill="#fff" d="M12 7V3H2v18h20V7H12zM6 19H4v-2h2v2zm0-4H4v-2h2v2zm0-4H4V9h2v2zm0-4H4V5h2v2zm4 12H8v-2h2v2zm0-4H8v-2h2v2zm0-4H8V9h2v2zm0-4H8V5h2v2zm10 12h-8v-2h2v-2h-2v-2h2v-2h-2V9h8v10zm-2-8h-2v2h2v-2zm0 4h-2v2h2v-2z"/></svg>
<div class="t nav" style="left:122.5px;top:1071px;letter-spacing:-0.32px">Organization</div>
<svg class="a" style="left:426px;top:1072px" width="40" height="40" viewBox="0 0 24 24"><path fill="#fff" d="M16.59 8.59L12 13.17 7.41 8.59 6 10l6 6 6-6z"/></svg>

<!-- divider -->
<div class="a" style="left:2px;top:1154px;width:558px;height:2px;background:#3a3a3a"></div>

<!-- Account -->
<div class="a" style="left:60px;top:1196px;width:48px;height:48px;background:#3629ff;border-radius:8px"></div>
<div class="t nav" style="left:123.5px;top:1199px;letter-spacing:-0.10px">Account</div>
<svg class="a" style="left:456px;top:1200px" width="40" height="40" viewBox="0 0 24 24"><path fill="#fff" d="M16.59 8.59L12 13.17 7.41 8.59 6 10l6 6 6-6z"/></svg>

<!-- Domain Report -->
<svg class="a" style="left:66px;top:1312px" width="40" height="40" viewBox="0 0 24 24"><path fill="#fff" d="M15 3H5c-1.100 0-1.990.9-1.990 2L3 19c0 1.100.89 2 1.990 2H19c1.100 0 2-.9 2-2V9l-6-6zM5 19V5h9v5h5v9H5zM9 8c0 .55-.45 1-1 1s-1-.45-1-1 .45-1 1-1 1 .45 1 1zm0 4c0 .55-.45 1-1 1s-1-.45-1-1 .45-1 1-1 1 .45 1 1zm0 4c0 .55-.45 1-1 1s-1-.45-1-1 .45-1 1-1 1 .45 1 1z"/></svg>
<div class="t nav" style="left:122px;top:1311px;letter-spacing:-0.64px">Domain Report</div>

<!-- divider -->
<div class="a" style="left:2px;top:1396px;width:558px;height:2px;background:#3a3a3a"></div>

<!-- System status -->
<div class="t" style="left:66px;top:1421px;font-size:29.5px;letter-spacing:-.12px;line-height:40px;color:#fff">System Status</div>
<svg class="a" style="left:264px;top:1422px" width="40" height="40" viewBox="0 0 24 24"><path fill="#2ee88f" d="M16.59 7.580L10 14.170l-3.590-3.580L5 12l5 5 8-8zM12 2C6.480 2 2 6.480 2 12s4.480 10 10 10 10-4.480 10-10S17.520 2 12 2zm0 18c-4.420 0-8-3.580-8-8s3.580-8 8-8 8 3.580 8 8-3.580 8-8 8z"/></svg>
<div class="t" style="left:312px;top:1421px;font-size:29.5px;letter-spacing:.05px;line-height:40px;color:#fff">Operational</div>

<!-- collapse handle -->
<div class="a" style="left:556px;top:36px;width:26px;height:48px;background:#000;border-radius:0 10px 10px 0"></div>
<svg class="a" style="left:551.6px;top:43.5px" width="33" height="33" viewBox="0 0 24 24"><path fill="#fff" d="M15.41 7.41L14 6l-6 6 6 6 1.41-1.41L10.83 12z"/></svg>


<!-- ============ WINDOW FRAME ============ -->
<svg class="a" style="left:0;top:1460px" width="30" height="28" viewBox="0 1460 30 28"><path fill="none" stroke="#d2d2d2" stroke-width="1.2" d="M2,1476.4 L5.5,1477.2 L9.3,1484 L2,1484.4 M13.6,1484.5 L14.6,1486"/></svg>
<svg class="a" style="left:2040px;top:1466px" width="22" height="22" viewBox="2040 1466 22 22"><path fill="#bdbdbd" d="M2060,1469 A17,17 0 0 1 2043,1486 L2060,1486 Z"/></svg>
<div class="a" style="left:0;top:0;width:2062px;height:3px;background:#ecf0f4"></div>
<div class="a" style="left:2px;top:3px;width:2058px;height:1px;background:#dcdfdd"></div>
<div class="a" style="left:0;top:0;width:1px;height:1488px;background:#eef2f6"></div>
<div class="a" style="left:1px;top:3px;width:1px;height:1484px;background:#fbfdff"></div>
<div class="a" style="left:2060px;top:3px;width:1px;height:1484px;background:#f6f8fa"></div>
<div class="a" style="left:2061px;top:0;width:1px;height:1488px;background:#eef2f6"></div>
<div class="a" style="left:1px;top:1486px;width:2060px;height:1px;background:#fbfdff"></div>
<div class="a" style="left:0;top:1487px;width:2062px;height:1px;background:#ecf0f4"></div>
</div>
</body>
</html>
